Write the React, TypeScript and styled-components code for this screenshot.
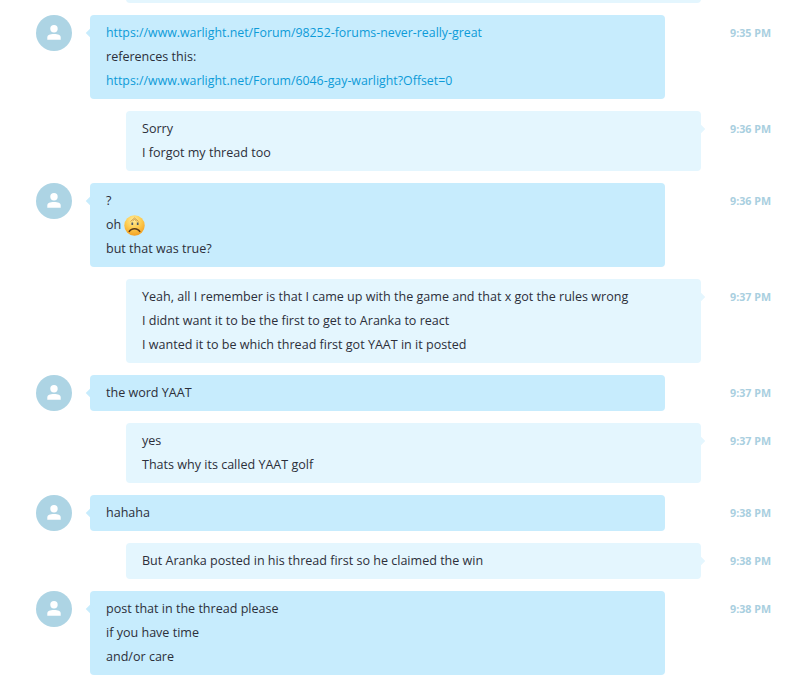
import React from 'react';
import styled, { createGlobalStyle } from 'styled-components';

const Global = createGlobalStyle`
  html, body { margin: 0; padding: 0; background: #fff; height: 686px; overflow: hidden; }
  body { font-family: "Open Sans", "Noto Sans", "Liberation Sans", sans-serif; }
`;
const Log = styled.div`
  display: flex; flex-direction: column; gap: 12px; margin-top: -33px;
  padding: 0 20px 0 36px;
`;
const Row = styled.div`display: flex; align-items: flex-start;`;
const AvatarCircle = styled.div`
  width: 36px; height: 36px; flex: none; border-radius: 50%; background: #add4e4;
  display: flex; align-items: center; justify-content: center;
`;
const Bubble = styled.div<{ $sent?: boolean }>`
  position: relative; box-sizing: border-box; width: 575px; flex: none;
  margin-left: ${p => (p.$sent ? '90px' : '18px')};
  padding: 6px 16px; border-radius: 4px;
  background: ${p => (p.$sent ? '#e4f6fe' : '#c7ecfd')};
  &::after {
    content: ''; position: absolute; top: 15px; width: 6px; height: 6px;
    transform: rotate(45deg); background: inherit;
    ${p => (p.$sent ? 'right: -3px;' : 'left: -3px;')}
  }
`;
const Line = styled.div`
  font-size: 12.55px; line-height: 24px; height: 24px; color: #2c2f3a; white-space: nowrap;
  display: flex; align-items: center; gap: 3px;
`;
const Link = styled.a`color: #0d9bd8; text-decoration: none; font-size: 12.35px;`;
const Time = styled.div`
  margin-left: auto; margin-top: 10px; font-size: 10.7px; line-height: 16px;
  font-weight: 700; color: #a9cfe0; white-space: nowrap;
`;

const Avatar = () => (
  <AvatarCircle>
    <svg width="14" height="16" viewBox="0 0 14 16" fill="#fff">
      <circle cx="7" cy="3.8" r="3.7" />
      <path d="M.3 14.8v-2.4C.3 10 3 9 7 9s6.7 1 6.7 3.4v2.4z" />
    </svg>
  </AvatarCircle>
);

const Sad = () => (
  <svg width="21" height="21" viewBox="0 0 21 21">
    <defs>
      <radialGradient id="g" cx="45%" cy="25%" r="80%">
        <stop offset="0" stopColor="#ffec9a" />
        <stop offset=".5" stopColor="#fdcb4e" />
        <stop offset="1" stopColor="#f39a1c" />
      </radialGradient>
    </defs>
    <circle cx="10.5" cy="10.5" r="10.2" fill="url(#g)" />
    <path d="M6.5 6.5L10.5 3l4 3.5M8.5 6l2-1.6 2 1.6" stroke="#c9964a" strokeWidth=".9" fill="none" />
    <path d="M8.3 10V7.4M13.7 10V7.4" stroke="#4d5a68" strokeWidth="1.7" fill="none" />
    <path d="M5 17c1.2-2.4 3.2-3.3 5.5-3.3S14.800 14.600 16 17" stroke="#5b3a18" strokeWidth="1.6" fill="none" />
  </svg>
);

type Msg = { sent?: boolean; time?: string; lines: React.ReactNode[] };
const msgs: Msg[] = [
  { sent: true, lines: [' '] },
  { time: '9:35 PM', lines: [
    <Link>https://www.warlight.net/Forum/98252-forums-never-really-great</Link>,
    'references this:',
    <Link>https://www.warlight.net/Forum/6046-gay-warlight?Offset=0</Link>,
  ] },
  { sent: true, time: '9:36 PM', lines: ['Sorry', 'I forgot my thread too'] },
  { time: '9:36 PM', lines: ['?', <>oh <Sad /></>, 'but that was true?'] },
  { sent: true, time: '9:37 PM', lines: [
    'Yeah, all I remember is that I came up with the game and that x got the rules wrong',
    'I didnt want it to be the first to get to Aranka to react',
    'I wanted it to be which thread first got YAAT in it posted',
  ] },
  { time: '9:37 PM', lines: ['the word YAAT'] },
  { sent: true, time: '9:37 PM', lines: ['yes', 'Thats why its called YAAT golf'] },
  { time: '9:38 PM', lines: ['hahaha'] },
  { sent: true, time: '9:38 PM', lines: ['But Aranka posted in his thread first so he claimed the win'] },
  { time: '9:38 PM', lines: ['post that in the thread please', 'if you have time', 'and/or care'] },
];

export default function App() {
  return (
    <>
      <Global />
      <Log>
        {msgs.map((m, i) => (
          <Row key={i}>
            {!m.sent && <Avatar />}
            <Bubble $sent={m.sent}>
              {m.lines.map((l, j) => <Line key={j}>{l}</Line>)}
            </Bubble>
            {m.time && <Time>{m.time}</Time>}
          </Row>
        ))}
      </Log>
    </>
  );
}
